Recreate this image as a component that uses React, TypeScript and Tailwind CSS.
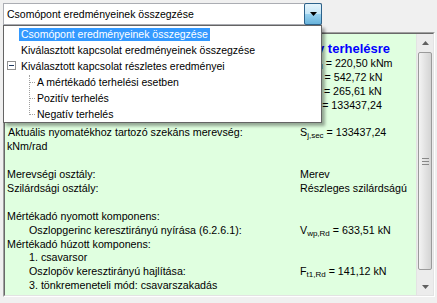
import React from 'react';

const Sub: React.FC<{ children: React.ReactNode }> = ({ children }) => (
  <span className="text-[8px] leading-none align-[-2px]">{children}</span>
);

interface Row {
  left?: React.ReactNode;
  right?: React.ReactNode;
  indent?: boolean;
}

// the first rows' labels sit under the open dropdown, only the values peek out
const rows: Row[] = [
  { right: <>M<Sub>j,Ed</Sub> = 220,50 kNm</> },
  { right: <>N<Sub>j,Ed</Sub> = 542,72 kN</> },
  { right: <>V<Sub>j,Ed</Sub> = 265,61 kN</> },
  { right: <>S<Sub>j,ini</Sub> = 133437,24</> },
  { left: 'kNm/rad' },
  {
    left: <span className="pl-[1px]">Aktuális nyomatékhoz tartozó szekáns merevség:</span>,
    right: <>S<Sub>j,sec</Sub> = 133437,24</>,
  },
  { left: 'kNm/rad' },
  {},
  { left: 'Merevségi osztály:', right: 'Merev' },
  { left: 'Szilárdsági osztály:', right: 'Részleges szilárdságú' },
  {},
  { left: 'Mértékadó nyomott komponens:' },
  { left: 'Oszlopgerinc keresztirányú nyírása (6.2.6.1):', indent: true, right: <>V<Sub>wp,Rd</Sub> = 633,51 kN</> },
  { left: 'Mértékadó húzott komponens:' },
  { left: '1. csavarsor', indent: true },
  { left: 'Oszlopöv keresztirányú hajlítása:', indent: true, right: <>F<Sub>t1,Rd</Sub> = 141,12 kN</> },
  { left: '3. tönkremeneteli mód: csavarszakadás', indent: true },
];

const items = [
  { label: 'Csomópont eredményeinek összegzése', level: 0, selected: true },
  { label: 'Kiválasztott kapcsolat eredményeinek összegzése', level: 0 },
  { label: 'Kiválasztott kapcsolat részletes eredményei', level: 0, expanded: true },
  { label: 'A mértékadó terhelési esetben', level: 1 },
  { label: 'Pozitív terhelés', level: 1 },
  { label: 'Negatív terhelés', level: 1 },
];

const ScrollArrow: React.FC<{ down?: boolean }> = ({ down }) => (
  <div className="h-[17px] flex items-center justify-center">
    <svg width="7" height="4" viewBox="0 0 7 4">
      {down ? <path d="M0 0h7L3.5 4z" fill="#606060" /> : <path d="M0 4h7L3.5 0z" fill="#606060" />}
    </svg>
  </div>
);

export default function App() {
  return (
    <div className="relative w-[437px] h-[303px] overflow-hidden bg-[#f0f0f0] text-black font-['Liberation_Sans',Arial,sans-serif]">
      {/* combo */}
      <div className="pt-[3px] pl-[3px]">
        <div className="relative w-[319px] h-[22px] bg-white border border-[#abadb3] flex items-center">
          <span className="pl-[3px] text-[10.5px] leading-none">Csomópont eredményeinek összegzése</span>
          <div className="absolute right-[-1px] top-[-1px] w-[18px] h-[22px] border border-[#2c628b] rounded-[2px] bg-[linear-gradient(to_bottom,#e5f4fc_0%,#c4e5f6_50%,#98d1ef_50%,#68b3db_100%)] flex items-center justify-center">
            <svg width="7" height="4" viewBox="0 0 7 4">
              <path d="M0 0h7L3.5 4z" fill="#000" />
            </svg>
          </div>
        </div>
      </div>

      {/* result panel */}
      <div className="mt-[7px] ml-[3px] w-[432px] h-[265px] border border-t-[#a0a0a0] border-l-[#a0a0a0] border-b-white border-r-white">
        <div className="h-full border border-t-[#696969] border-l-[#696969] border-b-[#e3e3e3] border-r-[#e3e3e3] bg-[#e0ffe0] flex">
          <div className="flex-1 pl-[2px] text-[10.7px] leading-[13.9px] whitespace-nowrap overflow-hidden">
            <div className="h-[23px] pt-[7px] pr-[26px] flex justify-end text-[13px] leading-[16px] font-bold text-[#0000ff]">
              Eredmények pozitív terhelésre
            </div>
            {rows.map((r, i) => (
              <div key={i} className="flex h-[13.9px]">
                <div className={`w-[293px] ${r.indent ? 'pl-[22px]' : ''}`}>{r.left}</div>
                <div>{r.right}</div>
              </div>
            ))}
          </div>
          <div className="w-[17px] bg-[#ececec] border-l border-[#e3e3e3] flex flex-col">
            <ScrollArrow />
            <div className="flex-1 px-[1px] pt-[1px] pb-[8px]">
              <div className="h-full rounded-[2px] border border-[#9b9b9b] bg-[linear-gradient(to_right,#f4f4f4,#e3e3e3_50%,#d4d4d4)] flex flex-col items-center justify-center gap-[2px]">
                <div className="w-[7px] border-t border-[#888]" />
                <div className="w-[7px] border-t border-[#888]" />
                <div className="w-[7px] border-t border-[#888]" />
              </div>
            </div>
            <ScrollArrow down />
          </div>
        </div>
      </div>

      {/* dropdown list */}
      <div className="absolute left-[3px] top-[25px] w-[319px] h-[98px] bg-white border border-[#646464] shadow-[3px_3px_3px_rgba(0,0,0,0.35)] text-[10.5px]">
        <div className="relative">
          <div className="absolute left-[25px] top-[49px] h-[40px] border-l border-dotted border-[#a0a0a0]" />
          {items.map((it, i) => (
            <div key={i} className={`relative h-[16px] flex items-center ${it.level ? 'pl-[31px]' : 'pl-[15px]'}`}>
              {it.level === 1 && (
                <div className="absolute left-[25px] top-[8px] w-[6px] border-t border-dotted border-[#a0a0a0]" />
              )}
              {it.expanded && (
                <div className="absolute left-[3px] top-[3px] w-[9px] h-[9px] border border-[#919191] bg-white flex items-center justify-center">
                  <div className="w-[5px] border-t border-[#1f3a60]" />
                </div>
              )}
              <span
                className={`px-[2px] h-[13px] leading-[13px] ${it.selected ? 'bg-[#3399ff] text-white' : ''}`}
              >
                {it.label}
              </span>
            </div>
          ))}
        </div>
      </div>
    </div>
  );
}
